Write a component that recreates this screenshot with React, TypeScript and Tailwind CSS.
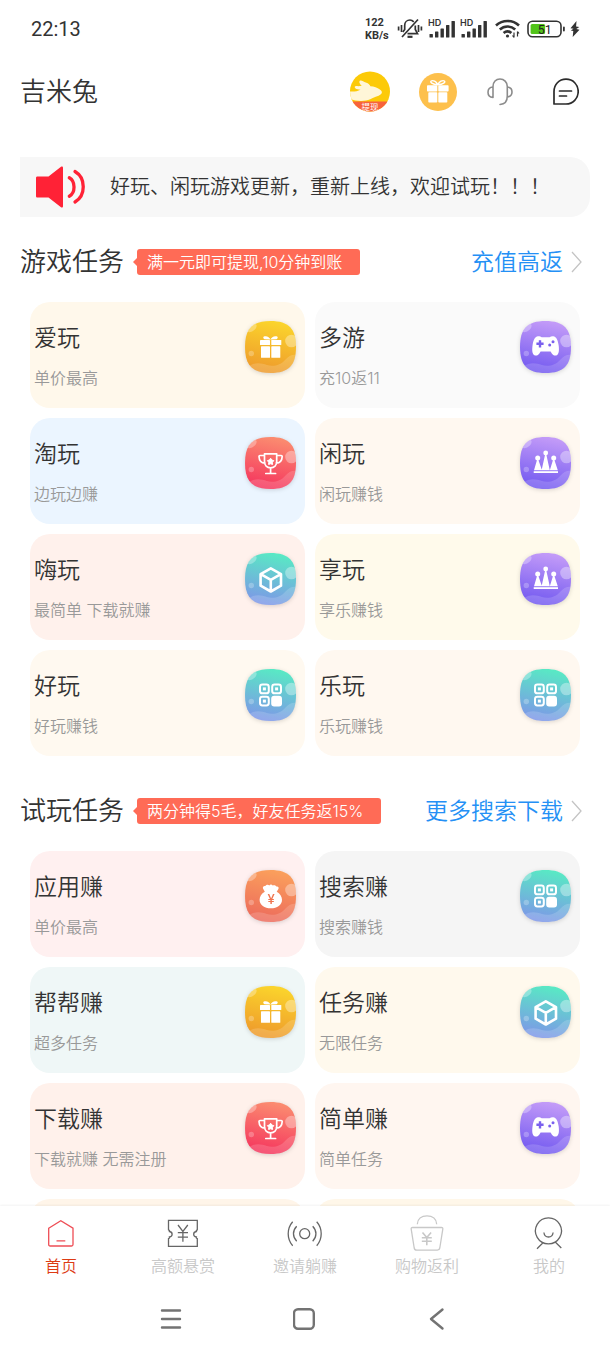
import { useId, useState } from "react";
import type { ReactNode } from "react";

type Tone = "gold" | "violet" | "red" | "teal" | "orange";
type Glyph = "gift" | "gamepad" | "trophy" | "crown" | "cube" | "grid" | "bag";

interface Task {
  title?: string;
  desc?: string;
  bg: string;
  glyph?: Glyph;
}

const tones: Record<Tone, [string, string]> = {
  gold: ["#fbd52c", "#ee992c"],
  violet: ["#c49cf8", "#7259f0"],
  red: ["#fb8d70", "#f5355e"],
  teal: ["#58eac4", "#7e96e8"],
  orange: ["#fba05c", "#ec6a5c"],
};

const glyphTone: Record<Glyph, Tone> = {
  gift: "gold",
  gamepad: "violet",
  trophy: "red",
  crown: "violet",
  cube: "teal",
  grid: "teal",
  bag: "orange",
};

const gameTasks: Task[] = [
  { title: "爱玩", desc: "单价最高", bg: "bg-[#fff8eb]", glyph: "gift" },
  { title: "多游", desc: "充10返11", bg: "bg-[#fafafa]", glyph: "gamepad" },
  { title: "淘玩", desc: "边玩边赚", bg: "bg-[#ebf5ff]", glyph: "trophy" },
  { title: "闲玩", desc: "闲玩赚钱", bg: "bg-[#fff8f0]", glyph: "crown" },
  { title: "嗨玩", desc: "最简单 下载就赚", bg: "bg-[#fff1ec]", glyph: "cube" },
  { title: "享玩", desc: "享乐赚钱", bg: "bg-[#fffaeb]", glyph: "crown" },
  { title: "好玩", desc: "好玩赚钱", bg: "bg-[#fff9f0]", glyph: "grid" },
  { title: "乐玩", desc: "乐玩赚钱", bg: "bg-[#fff8f0]", glyph: "grid" },
];

const trialTasks: Task[] = [
  { title: "应用赚", desc: "单价最高", bg: "bg-[#fff0f0]", glyph: "bag" },
  { title: "搜索赚", desc: "搜索赚钱", bg: "bg-[#f5f5f5]", glyph: "grid" },
  { title: "帮帮赚", desc: "超多任务", bg: "bg-[#eff7f7]", glyph: "gift" },
  { title: "任务赚", desc: "无限任务", bg: "bg-[#fff9ed]", glyph: "cube" },
  { title: "下载赚", desc: "下载就赚 无需注册", bg: "bg-[#fff1eb]", glyph: "trophy" },
  { title: "简单赚", desc: "简单任务", bg: "bg-[#fff6f0]", glyph: "gamepad" },
  { bg: "bg-[#fff5e9]" },
  { bg: "bg-[#fff7e9]" },
];

const glyphs: Record<Glyph, ReactNode> = {
  gift: (
    <g fill="#fff">
      <path d="M25.500 18.500c-1-2.300-3.500-3.900-6-3.200-1.800.6-1.500 2.300 0 2.900zM25.500 18.500c1-2.300 3.500-3.900 6-3.200 1.800.6 1.500 2.300 0 2.900z" />
      <rect x="15" y="19" width="10" height="5" rx="0.600" />
      <rect x="26.300" y="19" width="10" height="5" rx="0.600" />
      <rect x="16" y="25.300" width="9" height="11.500" rx="0.600" />
      <rect x="26.300" y="25.300" width="9" height="11.500" rx="0.600" />
    </g>
  ),
  gamepad: (
    <>
      <path
        d="M18 15.200c1.600-.1 2.600.3 3.600 1h8c1-.7 2-1.100 3.600-1 3.400.3 4.800 4.800 5.400 8.800.6 4.300.6 8.300-1.400 9.900-1.900 1.400-4.200.5-5.400-1.400l-1.200-2h-10l-1.200 2c-1.200 1.900-3.500 2.800-5.400 1.400-2-1.600-2-5.600-1.400-9.900.6-4 2-8.500 5.400-8.800z"
        fill="#fff"
      />
      <path d="M20 19.200v7.200M16.400 22.800h7.200" stroke="#7a60ee" strokeWidth="2.400" />
      <circle cx="33" cy="20.700" r="1.500" fill="#7a60ee" />
      <circle cx="29.700" cy="24" r="1.500" fill="#7a60ee" />
    </>
  ),
  trophy: (
    <>
      <path
        d="M19.500 16.800h12.200v8c0 3.500-2.500 6-6.100 6s-6.100-2.500-6.100-6zM19.500 18.500H15c-.8 0-1 .5-1 1 .2 4 2.500 6.600 6 6.600M31.700 18.500h4.500c.8 0 1 .5 1 1-.2 4-2.500 6.600-6 6.600M25.600 31v5.300M20.800 36.500h9.800"
        fill="none"
        stroke="#fff"
        strokeWidth="1.700"
        strokeLinecap="round"
        strokeLinejoin="round"
      />
      <path
        d="M25.600 21.200l1.200 1.800 2 .6-1.300 1.700.1 2.200-2-.7-2 .7.100-2.200-1.300-1.700 2-.6z"
        fill="#fff"
        stroke="#fff"
        strokeLinejoin="round"
      />
    </>
  ),
  crown: (
    <g fill="#fff">
      <circle cx="17.700" cy="21" r="2.500" />
      <circle cx="25.700" cy="16" r="2.400" />
      <circle cx="33.700" cy="21" r="2.500" />
      <path d="M17 23h1.400L22 33.300h-8zM25 18h1.400l3.400 15.300h-8.200zM33 23h1.400l3.400 10.300h-8z" />
      <rect x="13.700" y="34.200" width="24.300" height="1.800" />
    </g>
  ),
  cube: (
    <path
      d="M25.800 15.300l10.200 5.800v11.600l-10.200 5.800-10.200-5.800V21.100zM15.800 21.200l10 5.700 10-5.700M25.800 26.900v11.400"
      fill="none"
      stroke="#fff"
      strokeWidth="2.600"
      strokeLinejoin="round"
    />
  ),
  grid: (
    <>
      <g fill="none" stroke="#fff" strokeWidth="2">
        <rect x="15" y="15.500" width="8.800" height="8.800" rx="2.400" />
        <rect x="27.200" y="15.500" width="8.800" height="8.800" rx="2.400" />
        <rect x="15" y="27.700" width="8.800" height="8.800" rx="2.400" />
      </g>
      <g fill="#fff">
        <rect x="17.900" y="18.400" width="3" height="3" />
        <rect x="30.100" y="18.400" width="3" height="3" />
        <rect x="17.900" y="30.600" width="3" height="3" />
        <rect x="26.200" y="26.700" width="10.800" height="10.800" rx="3" />
      </g>
    </>
  ),
  bag: (
    <>
      <path
        d="M19.800 21.700l-1.800-3.200c-.6-1.600.8-3 2.300-2.500 1-1.600 3-1.800 4-.6 1-1.200 2.600-1 3.400.2 1.500-1 3.300-.3 3.800 1 1.700-.4 2.600 1 1.900 2.400l-1.700 2.700c3.300 1.900 5.300 4.800 5.300 8 0 5.300-4.800 8.600-11.200 8.600s-11.200-3.300-11.200-8.600c0-3.200 1.900-6.100 5.200-8z"
        fill="#fff"
      />
      <text x="26" y="34" fill="#f0744f" fontSize="13" fontWeight="500" textAnchor="middle">
        ¥
      </text>
    </>
  ),
};

function TaskIcon({ glyph }: { glyph: Glyph }) {
  const id = useId();
  const [from, to] = tones[glyphTone[glyph]];
  const blob = "M25.500 0C44 0 51 8 51 26s-7 26-25.500 26S0 44 0 26 7 0 25.500 0z";

  return (
    <svg viewBox="0 0 51 52" className="h-[52px] w-[51px] shrink-0 drop-shadow-sm" aria-hidden="true">
      <defs>
        <linearGradient id={`${id}g`} x1="0.600" y1="0" x2="0.400" y2="1">
          <stop offset="0" stopColor={from} />
          <stop offset="1" stopColor={to} />
        </linearGradient>
        <clipPath id={`${id}c`}>
          <path d={blob} />
        </clipPath>
      </defs>
      <path d={blob} fill={`url(#${id}g)`} />
      <g clipPath={`url(#${id}c)`} fill="#fff">
        <ellipse cx="7" cy="7" rx="5.500" ry="3" transform="rotate(-40 7 7)" opacity="0.300" />
        <circle cx="6.300" cy="32.500" r="2.700" opacity="0.250" />
        <circle cx="46.500" cy="20" r="6.300" opacity="0.350" />
        <path d="M3 46c6-5 13-4 19-2s14 0 18-5 8-6 12-5v20H3z" opacity="0.160" />
      </g>
      {glyphs[glyph]}
    </svg>
  );
}

function TaskCard({ task }: { task: Task }) {
  return (
    <div className="pl-2.5 even:pr-2.5">
      <button
        type="button"
        className={`flex h-[106px] w-full items-start justify-between rounded-[20px] pt-[19px] pr-[9px] pl-1 text-left ${task.bg}`}
      >
        <span className="flex flex-col gap-3 pt-px">
          <span className="text-[23px] leading-8 text-[#333]">{task.title}</span>
          <span className="text-base leading-6 text-[#999]">{task.desc}</span>
        </span>
        {task.glyph && <TaskIcon glyph={task.glyph} />}
      </button>
    </div>
  );
}

interface TaskSectionProps {
  title: string;
  badge: string;
  link: string;
  tasks: Task[];
}

function TaskSection({ title, badge, link, tasks }: TaskSectionProps) {
  return (
    <section className="px-5">
      <div className="flex h-[60px] items-center">
        <h2 className="shrink-0 text-[26px] leading-9 text-[#333]">{title}</h2>
        <span className="ml-[9px] h-0 w-0 border-y-4 border-r-4 border-y-transparent border-r-[#ff6b56]" />
        <span className="rounded-[3px] bg-[#ff6b56] pr-[18px] pl-2.5 text-base leading-[26px] whitespace-nowrap text-white">
          {badge}
        </span>
        <a
          href="#"
          className="ml-auto flex shrink-0 items-center gap-2 pr-2 text-[23px] leading-8 text-[#2490f5]"
        >
          {link}
          <svg viewBox="0 0 11 22" className="h-[22px] w-[11px]" fill="none" aria-hidden="true">
            <path d="M1 1l9 10-9 10" stroke="#c4c4c4" strokeWidth="1.300" />
          </svg>
        </a>
      </div>
      <div className="grid grid-cols-2 gap-y-2.5 pt-2.5">
        {tasks.map((task, i) => (
          <TaskCard key={i} task={task} />
        ))}
      </div>
    </section>
  );
}

function Signal() {
  return (
    <svg viewBox="0 0 28 20" className="h-5 w-7 overflow-visible font-[Inter]" fill="#333" aria-hidden="true">
      <text x="0" y="7" fontSize="9" fontWeight="600">
        HD
      </text>
      <rect x="1.500" y="15" width="3.400" height="3.500" rx="0.500" />
      <rect x="7" y="12.500" width="3.400" height="6" rx="0.500" />
      <rect x="12.500" y="9.500" width="3.400" height="9" rx="0.500" />
      <rect x="18" y="6" width="3.400" height="12.500" rx="0.500" />
      <rect x="23.500" y="2" width="3.400" height="16.500" rx="0.500" />
    </svg>
  );
}

function StatusBar() {
  return (
    <div className="flex h-[58px] shrink-0 items-center pr-[30px] pl-[31px] text-[#333]">
      <span className="font-[Roboto] text-xl leading-6 font-normal">22:13</span>
      <div className="ml-auto flex items-center">
        <span className="flex w-8 flex-col font-[Roboto] text-[11px] leading-[13px] font-bold">
          <span>122</span>
          <span>KB/s</span>
        </span>
        <svg viewBox="0 0 26 22" className="h-[22px] w-[26px]" fill="none" stroke="#333" strokeWidth="1.700" aria-hidden="true">
          <path d="M4.500 7v7M1.600 8.500v4M21.500 7v7M24.400 8.500v4M21 1.500L5 19" />
          <path d="M16.800 3.800C15.600 2.600 14.400 2 13 2c-3 0-5.300 2.300-5.300 5.300v4.200L5.800 14M18.300 7.500v4l2.200 4.200H10.500" />
          <path d="M10.500 18.800h5" strokeWidth="2.200" />
        </svg>
        <span className="ml-[5px]">
          <Signal />
        </span>
        <span className="ml-1">
          <Signal />
        </span>
        <svg viewBox="0 0 26 20" className="ml-[7px] h-5 w-[26px]" fill="none" stroke="#333" strokeWidth="2.600" aria-hidden="true">
          <path d="M1 6.500c6.500-6 16.500-6 23 0M4.800 10.500c4.400-4 11-4 15.400 0M8.600 14c2.300-2 5.500-2 7.800 0" />
          <circle cx="12.500" cy="17" r="1.600" fill="#333" stroke="none" />
          <path d="M19 13.500v5M22.500 12.500v5M17.500 16.500l1.500 2M24 14.500l-1.500-2" strokeWidth="1.200" />
        </svg>
        <svg viewBox="0 0 39 18" className="ml-1.5 h-[18px] w-[39px]" aria-hidden="true">
          <rect x="1" y="1.200" width="33" height="15.600" rx="4.500" fill="none" stroke="#333" strokeWidth="1.600" />
          <rect x="3.600" y="4" width="14.500" height="10" rx="1.500" fill="#52c41a" />
          <rect x="36" y="6.500" width="1.800" height="5" rx="0.900" fill="#333" />
          <text x="17.800" y="13.500" fontSize="12.500" textAnchor="middle" fill="#222" className="font-[Roboto] font-normal">
            51
          </text>
        </svg>
        <svg viewBox="0 0 10 16" className="ml-1 h-4 w-2.5" fill="#333" aria-hidden="true">
          <path d="M6.500 0L.5 7.200l3 .6L.8 9.500l2.500.6L2.700 16l6.800-7.300-3.200-.6 3-2.200-3.200-.5z" />
        </svg>
      </div>
    </div>
  );
}

function Header() {
  return (
    <header className="flex h-[67px] items-center pr-[31px] pl-5">
      <h1 className="text-[26px] leading-9 text-[#333]">吉米兔</h1>
      <button type="button" aria-label="提现" className="ml-auto">
        <svg viewBox="0 0 40 41" className="h-[41px] w-10" aria-hidden="true">
          <defs>
            <clipPath id="cash-clip">
              <circle cx="20" cy="20.500" r="20" />
            </clipPath>
          </defs>
          <g clipPath="url(#cash-clip)">
            <rect width="40" height="41" fill="#fcca08" />
            <rect y="30.500" width="40" height="11" fill="#f7633c" />
            <path
              d="M0 20.500c4 .3 7.500-.2 10.500-1.800-2.200-.2-4-.6-5-1.300-1.400-1.100-.7-2.400.8-2.300 2 .2 3.700.1 5.500-.3-1.600-1.300-3.200-3.500-2-5 1.300-1.200 3.600.8 6 1.800 3 1 4 2.500 4.600 3.700 3.800.2 6.800 1.600 9.500 3.200 1.700 1.300 2.800 2.800 1.300 4.500-3 2.600-8 3.300-11 5.200-5.700 2.500-13.700 2.100-20.200-.2z"
              fill="#fff6d8"
            />
            <text x="20" y="38.500" fontSize="8.500" fontWeight="400" textAnchor="middle" fill="#fff">
              提现
            </text>
          </g>
        </svg>
      </button>
      <button type="button" aria-label="礼包" className="ml-[29px]">
        <svg viewBox="0 0 38 38" className="h-[38px] w-[38px]" aria-hidden="true">
          <circle cx="19" cy="19" r="19" fill="#fdc04c" />
          <g fill="none" stroke="#fff" strokeWidth="1.400" strokeLinejoin="round">
            <path d="M18.800 11.800c-1.500-3.300-4.800-5-6.600-3.800-1.500 1.200 1 3.300 6.600 3.800zM18.800 11.800c1.500-3.300 4.800-5 6.600-3.800 1.500 1.200-1 3.300-6.600 3.800z" />
          </g>
          <g fill="#fff">
            <rect x="8" y="12.200" width="10.300" height="6.300" rx="0.800" />
            <rect x="19.300" y="12.200" width="10.300" height="6.300" rx="0.800" />
            <rect x="9.300" y="19.200" width="9" height="10.300" rx="0.800" />
            <rect x="19.300" y="19.200" width="9" height="10.300" rx="0.800" />
          </g>
        </svg>
      </button>
      <button type="button" aria-label="客服" className="ml-[30px]">
        <svg viewBox="0 0 26 28" className="h-7 w-[26px]" fill="none" stroke="#8c8c8c" strokeWidth="1.600" aria-hidden="true">
          <path
            d="M6 19.500V8.500C6 4 9 1 13 1s7.300 3 7.300 7.500V18c0 5-2 8.200-7.300 8.500M6 9c-3.200.2-5 2.400-5 5.200s1.800 5 5 5.300M20.300 9c3 .3 4.700 2.400 4.700 5s-1.700 4.600-4.700 5"
            strokeLinecap="round"
          />
        </svg>
      </button>
      <button type="button" aria-label="消息" className="ml-10">
        <svg viewBox="0 0 26 28" className="h-7 w-[26px]" fill="none" stroke="#2b2b2b" strokeWidth="1.700" aria-hidden="true">
          <path d="M1 26V13.500C1 6.500 6 1.200 13 1.200s12.200 5.300 12.200 12.300S20 26 13 26z" strokeLinejoin="round" />
          <path d="M6.500 13h12M6.500 18h7" strokeLinecap="round" />
        </svg>
      </button>
    </header>
  );
}

const tabs = [
  {
    label: "首页",
    icon: (
      <g stroke="#ee4d55">
        <path d="M5.700 13.200L17.800 5.700 30 13.200V29.500c0 1-.5 1.500-1.500 1.500H7.200c-1 0-1.500-.5-1.500-1.500zM13.500 25.800h8.800" />
      </g>
    ),
  },
  {
    label: "高额悬赏",
    icon: (
      <>
        <path d="M3.500 5.300h28.800v9.500c-1 .5-1.300 1.200-1 1.700-3.500.5-3.500 5 0 5.500-.3.600 0 1.200 1 1.700v7.600H3.500v-7.600c1-.5 1.300-1.100 1-1.700 3.500-.5 3.500-5 0-5.500.3-.5 0-1.200-1-1.700z" />
        <path d="M13 10l4.900 6.500L22.800 10M17.900 16.500v10.200M12.800 17.700H23M12.800 22.200H23" />
      </>
    ),
  },
  {
    label: "邀请躺赚",
    icon: (
      <>
        <circle cx="17.700" cy="18.700" r="5" />
        <path d="M9.700 11.200c-4.300 4.500-4.300 10.500 0 15M25.700 11.200c4.300 4.500 4.300 10.500 0 15M5.700 6.700c-6 6.800-6 17.200 0 24M29.700 6.700c6 6.800 6 17.200 0 24" />
      </>
    ),
  },
  {
    label: "购物返利",
    icon: (
      <g stroke="#c8c8c8">
        <path d="M8.300 9.300C8.500 4 12.500.9 18 .9s9.500 3.100 9.700 8.400M3.500 12.500h29c1 0 1.500.7 1.300 1.700l-3 18.800c-.3 1.500-1 2.200-2.500 2.200H7.700c-1.500 0-2.200-.7-2.500-2.200l-3-18.800c-.2-1 .3-1.700 1.300-1.700z" />
        <path d="M13.500 17.500l4.300 5 4.300-5M17.800 22.500v7.700M12.800 22.800h10M12.800 26.300h10" strokeWidth="1.600" />
      </g>
    ),
  },
  {
    label: "我的",
    icon: (
      <path d="M17.400 2.800a13 13 0 1 0 .1 0zM12.900 17.500c.7 6 8.500 6 9.200 0M12 27.700l-6 6M24 26.700l6.300 6.300" />
    ),
  },
];

function TabBar() {
  const [active, setActive] = useState(0);

  return (
    <nav className="grid h-[76px] shrink-0 grid-cols-5 bg-white shadow-[0_-1px_2px_rgba(0,0,0,0.05)]">
      {tabs.map((tab, i) => (
        <button
          key={tab.label}
          type="button"
          onClick={() => setActive(i)}
          className="flex flex-col items-center gap-[3px] pt-[9px]"
        >
          <svg
            viewBox="0 0 36 36"
            className="h-9 w-9 overflow-visible"
            fill="none"
            stroke="#666"
            strokeWidth="1.300"
            aria-hidden="true"
          >
            {tab.icon}
          </svg>
          <span className={`text-base leading-6 ${active === i ? "text-[#dd3b14]" : "text-[#c8c8c8]"}`}>
            {tab.label}
          </span>
        </button>
      ))}
    </nav>
  );
}

function SystemNav() {
  return (
    <div className="grid h-[74px] shrink-0 grid-cols-3 place-items-center bg-white px-[104px]">
      <button type="button" aria-label="菜单">
        <svg viewBox="0 0 24 24" className="h-6 w-6" fill="none" stroke="#737373" strokeWidth="2.400" strokeLinecap="round">
          <path d="M3 3.500h18M3 12h18M3 20.500h18" />
        </svg>
      </button>
      <button type="button" aria-label="主屏幕">
        <svg viewBox="0 0 24 24" className="h-6 w-6" fill="none" stroke="#737373" strokeWidth="2.400">
          <rect x="1" y="2.200" width="19.800" height="19.600" rx="4" />
        </svg>
      </button>
      <button type="button" aria-label="返回">
        <svg viewBox="0 0 24 24" className="h-6 w-6" fill="none" stroke="#737373" strokeWidth="2.400" strokeLinecap="round" strokeLinejoin="round">
          <path d="M15.500 2.500L4 12l11.500 9.500" />
        </svg>
      </button>
    </div>
  );
}

export default function App() {
  return (
    <div className="flex h-screen flex-col bg-white font-['Inter','Noto_Sans_CJK_SC',sans-serif] font-[350]">
      <StatusBar />
      <main className="min-h-0 flex-1 overflow-y-auto [scrollbar-width:none]">
        <Header />
        <div className="mx-5 mt-8 mb-[15px] flex h-[60px] items-center rounded-r-[20px] bg-[#f7f7f7] pl-4">
          <svg viewBox="0 0 49 42" className="h-[42px] w-[49px] shrink-0" aria-hidden="true">
            <path
              d="M1.500 10.500h11L25 .8c1-.6 2-.2 2 1v38.400c0 1.200-1 1.600-2 1L12.500 31.500h-11c-1 0-1.500-.5-1.500-1.500V12c0-1 .5-1.500 1.500-1.500z"
              fill="#ff2236"
            />
            <path
              d="M33.300 11.800c6.300 3.500 6.300 15 0 18.500M39 5.500c11 6.500 11 24 0 30.500"
              fill="none"
              stroke="#ff2236"
              strokeWidth="3.300"
              strokeLinecap="round"
            />
          </svg>
          <p className="ml-[25px] overflow-hidden text-xl leading-7 whitespace-nowrap text-[#333]">
            好玩、闲玩游戏更新，重新上线，欢迎试玩！！！
          </p>
        </div>
        <div className="flex flex-col gap-[25px]">
          <TaskSection title="游戏任务" badge="满一元即可提现,10分钟到账" link="充值高返" tasks={gameTasks} />
          <TaskSection title="试玩任务" badge="两分钟得5毛，好友任务返15%" link="更多搜索下载" tasks={trialTasks} />
        </div>
      </main>
      <TabBar />
      <SystemNav />
    </div>
  );
}
